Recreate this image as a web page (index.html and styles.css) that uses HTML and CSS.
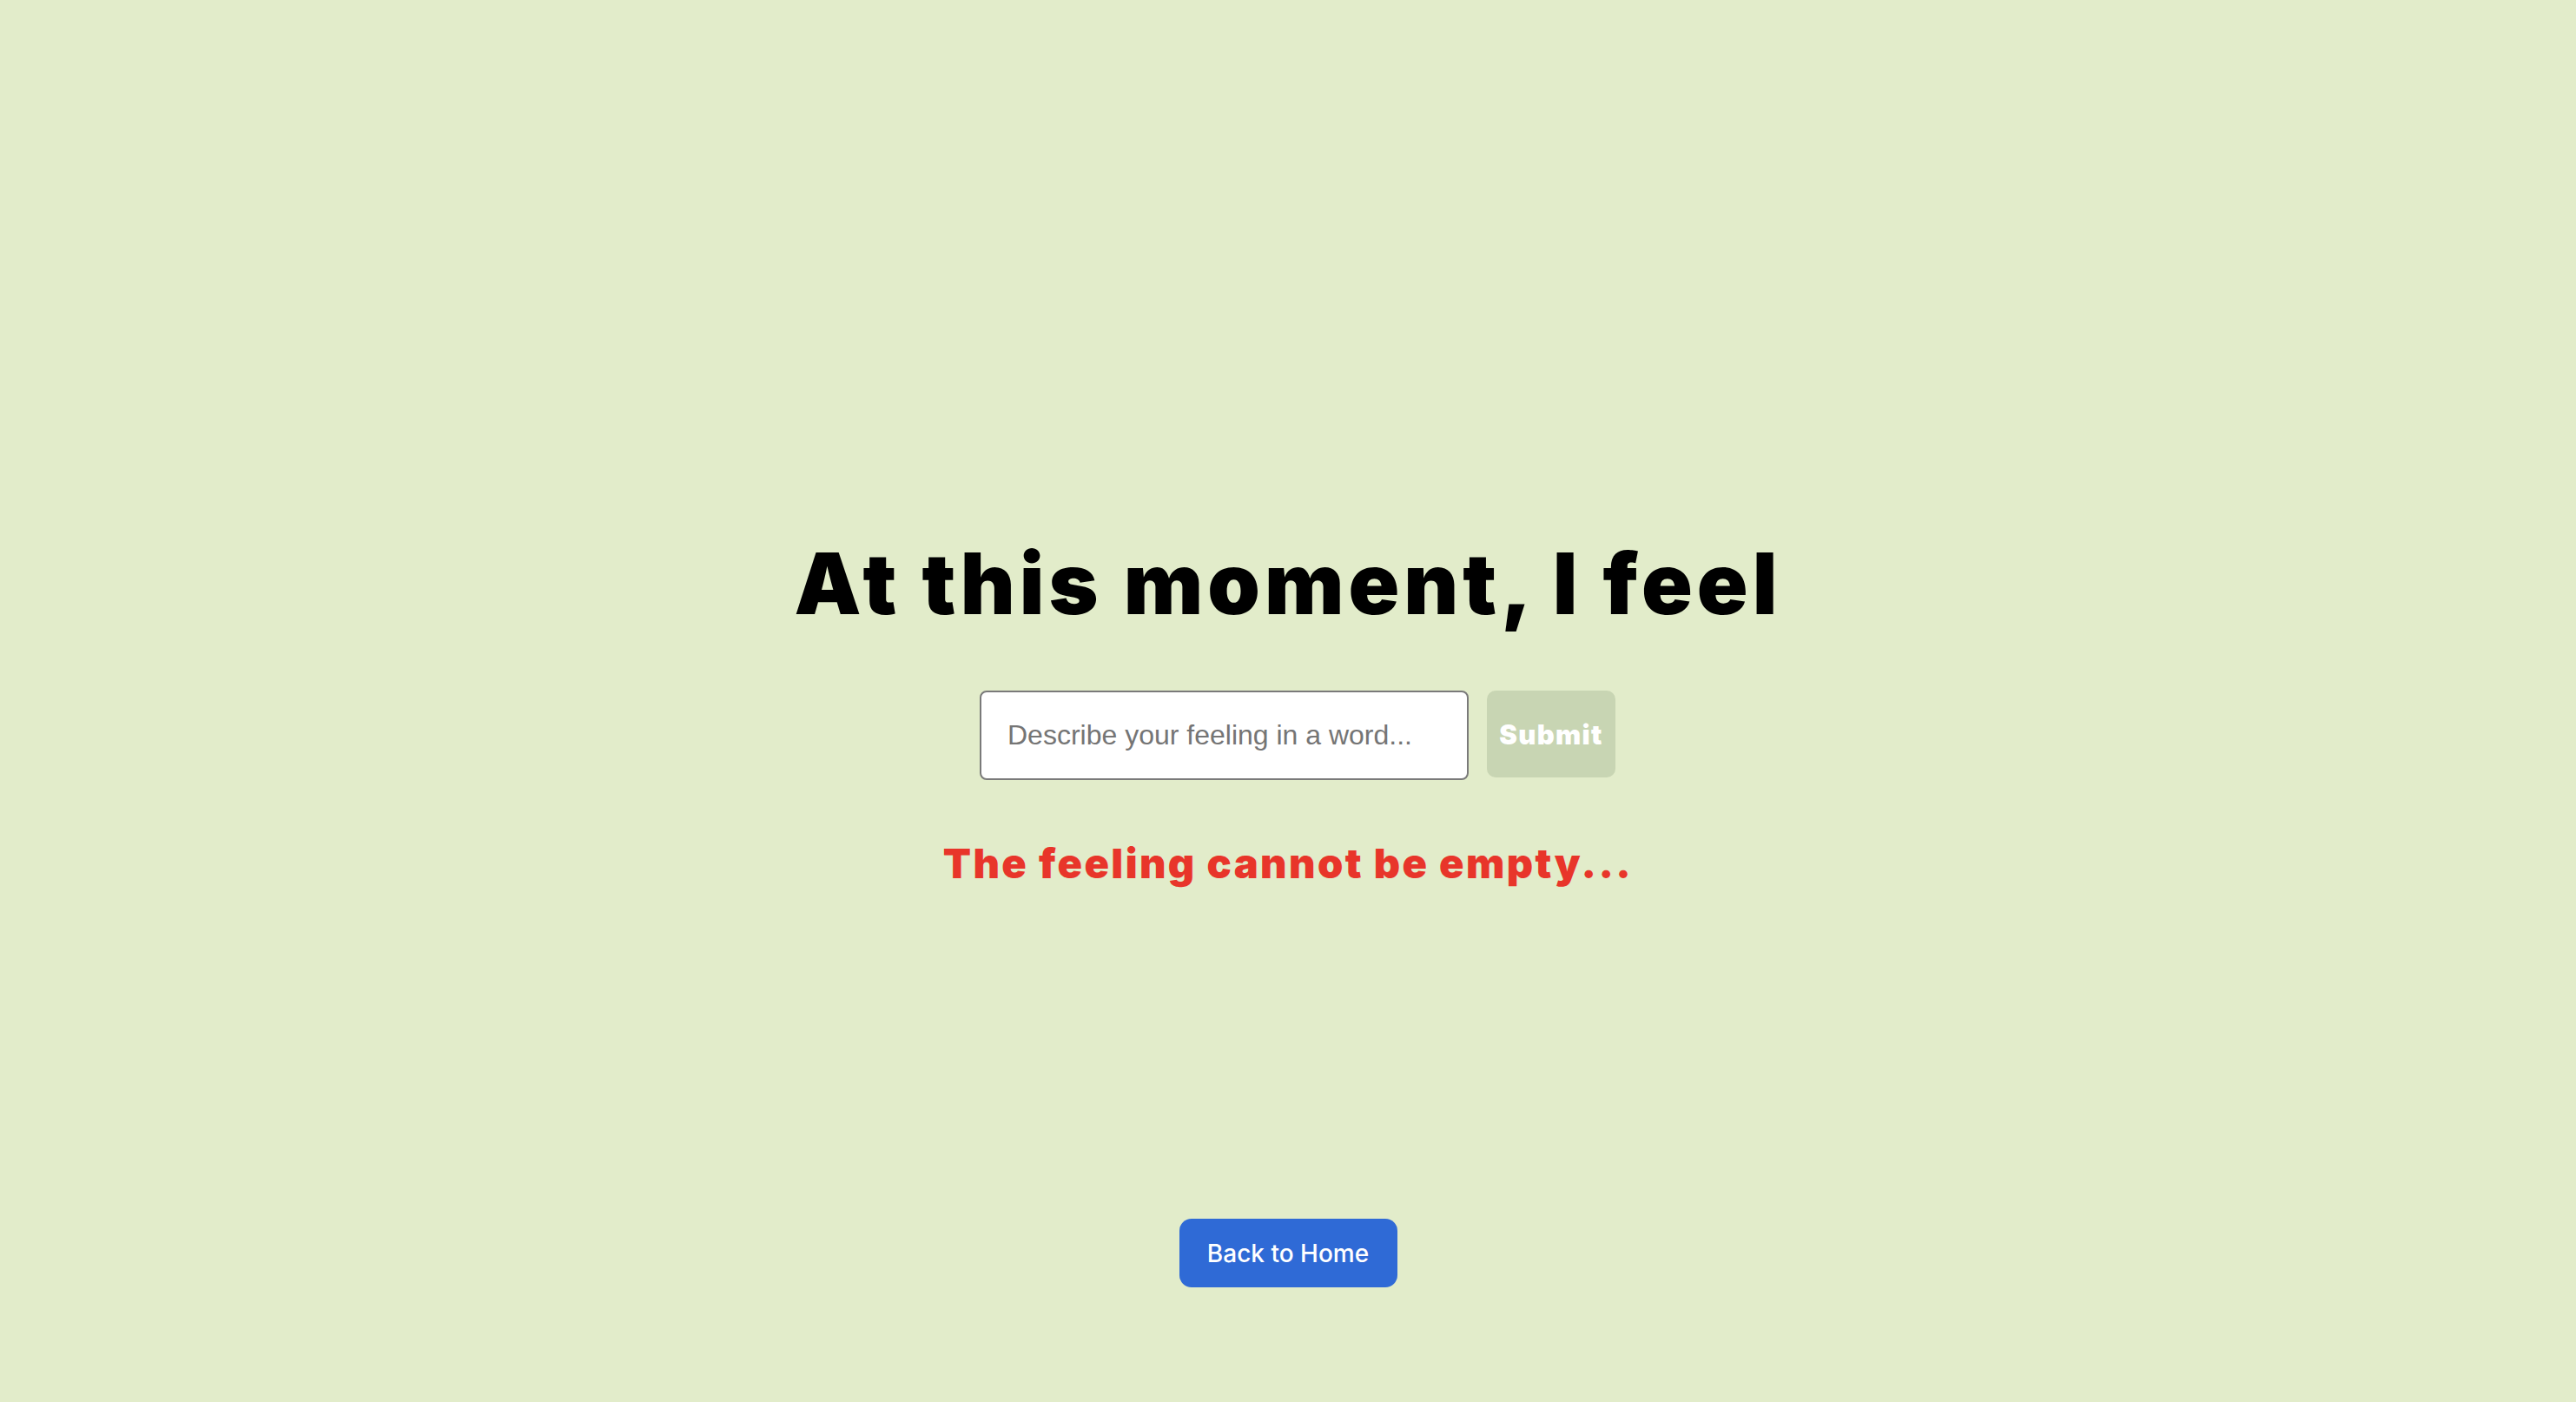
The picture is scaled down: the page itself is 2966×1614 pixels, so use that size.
FILE: index.html
```html
<!DOCTYPE html>
<html lang="en">
<head>
<meta charset="utf-8">
<title>At this moment, I feel</title>
<link rel="stylesheet" href="styles.css">
</head>
<body>
<main class="page">
  <section class="feel">
    <h1 class="feel-title">At this moment, I feel</h1>
    <form class="feel-form" onsubmit="return false;">
      <input class="feel-input" type="text" placeholder="Describe your feeling in a word...">
      <button class="feel-submit" type="submit" disabled>Submit</button>
    </form>
    <p class="feel-error">The feeling cannot be empty...</p>
  </section>
  <a class="home-btn" href="#">Back to Home</a>
</main>
</body>
</html>
```

FILE: styles.css
```css
* { box-sizing: border-box; }
html, body { margin: 0; padding: 0; }
body {
  background: #e2ecca;
  font-family: "Inter", "Liberation Sans", sans-serif;
  min-height: 100vh;
}
.page {
  display: flex;
  flex-direction: column;
  align-items: center;
  padding-top: 614px;
}
.feel {
  display: flex;
  flex-direction: column;
  align-items: center;
}
.feel-title {
  margin: 0;
  font-family: "Inter", sans-serif;
  font-weight: 900;
  font-size: 97px;
  line-height: 115px;
  color: #000;
  letter-spacing: 5px;
}
.feel-form {
  display: flex;
  gap: 21px;
  margin-top: 66px;
  margin-left: 22px;
}
.feel-input {
  width: 563px;
  height: 103px;
  border: 2px solid #7a7a7a;
  border-radius: 8px;
  background: #fff;
  padding: 0 30px;
  font-family: "Liberation Sans", Arial, sans-serif;
  font-size: 32px;
  color: #222;
  outline: none;
}
.feel-input::placeholder { color: #757575; }
.feel-submit {
  width: 148px;
  height: 100px;
  border: none;
  border-radius: 10px;
  background: #c8d5b3;
  color: #fff;
  font-family: "Inter", sans-serif;
  font-weight: 900;
  font-size: 31px;
  letter-spacing: 1.3px;
  padding: 0;
  margin-bottom: 3px;
}
.feel-error {
  margin: 67px 0 0;
  font-family: "Inter", sans-serif;
  font-weight: 900;
  font-size: 47px;
  line-height: 58px;
  letter-spacing: 2.4px;
  color: #e8352a;
}
.home-btn {
  margin-top: 380px;
  display: flex;
  align-items: center;
  justify-content: center;
  width: 251px;
  height: 79px;
  border-radius: 14px;
  background: #2f6ad6;
  color: #fff;
  text-decoration: none;
  font-family: "Inter", sans-serif;
  font-weight: 500;
  font-size: 28px;
}
```
